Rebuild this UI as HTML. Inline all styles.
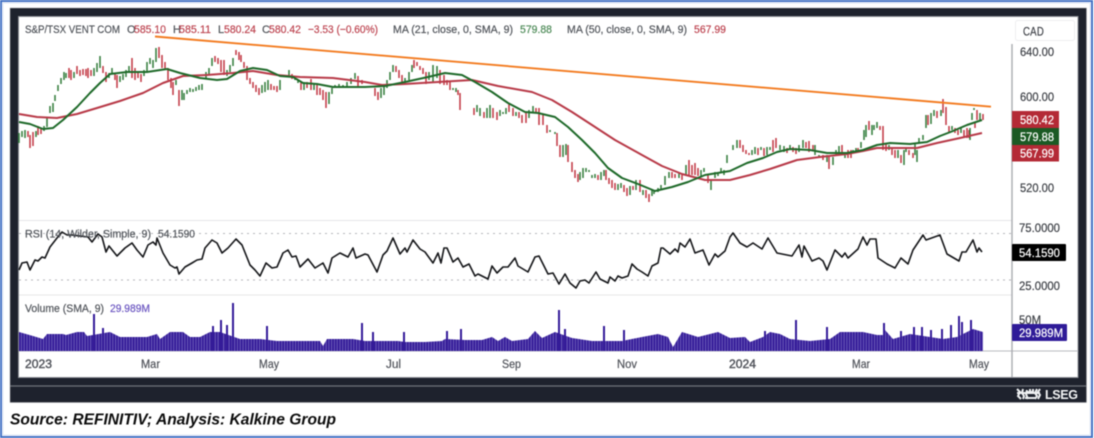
<!DOCTYPE html>
<html>
<head>
<meta charset="utf-8">
<style>
html,body{margin:0;padding:0;background:#fff;width:1094px;height:438px;overflow:hidden}
svg{display:block;filter:blur(.45px)}
text{font-family:"Liberation Sans",sans-serif;stroke-width:.2px}
.g{fill:#50545a;stroke:#50545a;font-size:11px}
.r{fill:#bd4450;stroke:#bd4450;font-size:11px}
.a{fill:#3f4248;stroke:#3f4248;font-size:12px}
.w{fill:#fff;stroke:#fff;font-size:12px}
.m{fill:#50535a;stroke:#50535a;font-size:11.5px}
</style>
</head>
<body>
<svg width="1094" height="438" viewBox="0 0 1094 438" xmlns="http://www.w3.org/2000/svg">
<defs>
<pattern id="vp" width="2.77" height="10" patternUnits="userSpaceOnUse" x="19">
<rect width="2.77" height="10" fill="#8477c6"/>
<rect width="2.1" height="10" fill="#341b98"/>
</pattern>
</defs>
<rect x="1" y="1" width="1091" height="436" fill="#fff" stroke="#4472c4" stroke-width="2"/>
<rect x="3" y="3" width="1087" height="432" fill="none" stroke="#dfe7f5" stroke-width="1"/>
<rect x="10" y="8" width="1076.500" height="394.500" fill="#1e222d" stroke="#a6a8ad" stroke-width=".5"/>
<rect x="18.500" y="16.500" width="1059.500" height="361" fill="#fff" stroke="#8a8d94" stroke-width="1"/>
<path d="M10 386H1086" stroke="#70737b" stroke-width="1.300"/>

<path d="M19 220.500H1012M19 295H1012" stroke="#e6e6e8" stroke-width="1"/>
<path d="M19 233.500H1012M19 280H1012" stroke="#b5b6ba" stroke-width="1" stroke-dasharray="2 4"/>
<path d="M19 351H1078" stroke="#b9bbbf" stroke-width="1"/>
<path d="M1012 44V377" stroke="#aaabaf" stroke-width="1.400"/>

<!-- red candles -->
<path fill="none" stroke="#c23540" stroke-width="1.500" d="M28 131V137M30 135V148M33 132V146M38 126V135M41 128V134M69 68V78M71 70V80M77 66V74M80 70V76M83 69V75M86 69V76M88 68V78M91 70V76M103 66V73M106 72V82M115 73V80M117 75V88M132 58V78M135 68V80M138 72V78M141 74V82M159 47V58M162 55V68M165 62V70M168 68V80M171 78V88M173 82V95M179 90V106M215 56V62M218 58V64M221 60V72M224 60V75M236 50V55M239 52V60M241 55V62M244 62V68M247 66V80M250 78V84M253 82V88M256 85V92M259 88V95M271 84V90M274 86V90M277 86V92M292 74V79M301 82V90M307 82V88M311 79V90M317 85V95M320 88V95M323 90V100M326 92V108M358 76V88M362 80V84M375 88V96M378 92V100M396 66V72M399 70V78M402 75V82M414 60V68M417 62V66M420 66V70M423 68V74M426 72V84M440 70V84M444 75V85M447 80V85M450 82V90M458 90V95M460 93V110M474 108V115M484 112V118M493 108V118M497 112V120M509 104V112M513 108V116M519 112V118M522 115V123M526 113V123M536 108V112M539 108V125M543 115V125M547 125V133M557 133V146M560 145V157M568 145V162M572 162V172M575 170V178M578 174V182M598 175V180M606 170V180M609 178V184M612 180V188M615 183V190M624 185V192M627 188V196M633 186V190M640 180V192M646 190V198M649 194V202M672 172V178M675 174V178M682 174V180M689 160V175M692 165V175M695 163V175M698 168V176M708 175V183M740 140V148M743 145V152M746 150V154M749 153V155M758 148V155M764 148V156M773 140V152M776 138V148M787 148V153M793 147V152M796 148V154M806 142V148M809 141V152M813 145V150M823 155V160M829 157V169M842 145V155M848 150V158M851 150V158M858 148V152M869 121V130M880 126V130M883 126V150M886 143V151M892 148V155M895 150V158M901 155V163M909 150V155M913 153V158M928 115V125M937 111V118M943 99V113M946 107V125M949 126V133M955 128V133M958 130V135M964 130V138M967 128V138M969 130V138M975 122V128M977 110V120M983 114V120"/>
<!-- green candles -->
<path fill="none" stroke="#2f7a38" stroke-width="1.500" d="M19 133V143M22 131V137M25 130V138M36 131V137M44 126V131M47 118V127M50 106V113M53 103V112M55 95V101M58 85V91M61 78V84M64 72V80M66 73V78M74 72V78M94 68V76M97 63V72M100 56V68M109 73V78M112 68V74M120 76V82M123 74V80M126 70V77M129 66V72M144 70V76M147 62V72M150 58V64M153 60V68M156 48V62M176 80V85M182 90V100M184 93V100M187 90V94M190 88V92M193 89V92M196 87V91M199 85V90M202 84V90M206 72V78M209 68V74M212 58V66M227 70V76M230 65V72M233 58V66M262 85V93M265 82V92M268 80V90M280 80V90M289 70V76M295 77V80M298 80V83M304 82V90M314 83V90M329 92V104M332 88V94M335 85V87M339 84V87M343 85V87M347 82V86M351 78V84M355 73V79M381 88V98M384 85V95M387 80V88M390 72V80M393 65V72M405 78V82M409 72V80M412 65V72M429 72V80M433 65V82M437 66V78M453 88V90M456 88V92M477 105V112M480 108V116M487 108V118M490 105V118M500 110V116M503 112V114M506 108V114M516 112V116M529 110V118M533 106V112M550 130V132M555 132V134M563 145V157M566 144V155M580 172V180M583 168V178M586 168V172M589 170V172M592 175V178M595 174V178M601 172V180M604 170V176M618 184V190M621 183V188M630 186V195M636 180V190M643 190V195M652 190V196M654 190V194M658 188V192M661 185V190M665 176V185M669 172V178M679 172V178M686 165V175M701 170V176M704 168V172M711 180V190M715 172V178M718 172V176M721 168V172M724 170V175M727 155V163M733 145V150M737 140V148M752 150V155M755 147V154M761 147V150M767 147V155M770 147V150M780 145V150M784 146V152M790 145V150M799 145V152M803 140V148M815 145V155M819 155V158M827 155V162M833 157V165M836 150V155M839 146V152M845 155V158M853 150V153M856 148V153M861 142V148M864 130V140M866 125V137M872 125V135M874 125V130M877 122V128M889 145V150M898 150V158M904 150V165M906 148V152M915 143V155M917 150V162M919 138V142M923 135V140M926 115V128M931 113V124M934 110V116M941 110V116M952 126V130M961 128V133M970 128V140M972 113V120M974 108V110M980 113V120"/>

<!-- MA 50 -->
<polyline fill="none" stroke="#b83a48" stroke-width="2" stroke-linejoin="round" points="19,114 37,117 57,118 77,114 97,108 120,101 143,93 163,83 183,76 207,75 233,73 253,71 277,75 300,77 333,78 365,82 382,85 405,84 438,82 472,80 498,86 532,92 552,100 572,112 592,125 615,140 642,155 662,166 682,174 705,180 730,180 750,175 770,169 797,160 820,157 847,154 863,151 877,148 897,148 917,148 937,143 960,138 982,133"/>
<!-- MA 21 -->
<polyline fill="none" stroke="#1f6a2a" stroke-width="2" stroke-linejoin="round" points="19,122 30,124 43,129 53,128 63,120 77,107 90,93 100,83 110,74 127,72 147,72 167,69 180,73 200,78 217,80 227,79 240,71 253,68 267,70 280,76 293,77 303,83 317,84 333,87 353,87 365,87 385,86 405,82 428,77 445,73 462,75 475,82 492,92 508,103 525,112 538,113 555,117 568,127 582,140 595,153 608,168 622,178 638,184 655,191 672,187 688,182 705,175 730,171 747,163 763,158 777,152 790,149 810,150 827,153 847,153 863,150 877,145 890,143 910,144 927,142 940,136 953,131 967,125 982,120"/>
<!-- trend -->
<line x1="155" y1="36.500" x2="991" y2="106.700" stroke="#f37b20" stroke-width="1.900"/>

<!-- legend -->
<text class="g" x="25" y="33" textLength="95" lengthAdjust="spacingAndGlyphs">S&amp;P/TSX VENT COM</text>
<text class="g" x="127" y="33">O</text><text class="r" x="134" y="33" textLength="32" lengthAdjust="spacingAndGlyphs">585.10</text>
<text class="g" x="173" y="33">H</text><text class="r" x="179" y="33" textLength="32" lengthAdjust="spacingAndGlyphs">585.11</text>
<text class="g" x="218" y="33">L</text><text class="r" x="224" y="33" textLength="32" lengthAdjust="spacingAndGlyphs">580.24</text>
<text class="g" x="262" y="33">C</text><text class="r" x="269" y="33" textLength="32" lengthAdjust="spacingAndGlyphs">580.42</text>
<text class="r" x="308" y="33" textLength="70" lengthAdjust="spacingAndGlyphs">−3.53 (−0.60%)</text>
<text class="g" x="393" y="33" textLength="120" lengthAdjust="spacingAndGlyphs">MA (21, close, 0, SMA, 9)</text>
<text class="g" x="520" y="33" textLength="32" lengthAdjust="spacingAndGlyphs" style="fill:#4d8a57;stroke:#4d8a57">579.88</text>
<text class="g" x="567" y="33" textLength="120" lengthAdjust="spacingAndGlyphs">MA (50, close, 0, SMA, 9)</text>
<text class="r" x="694" y="33" textLength="32" lengthAdjust="spacingAndGlyphs">567.99</text>

<!-- CAD -->
<rect x="1015.500" y="20.500" width="59" height="20" rx="2" fill="#fff" stroke="#eeeeef"/>
<text class="a" x="1023" y="35.500" textLength="21" lengthAdjust="spacingAndGlyphs" style="letter-spacing:.3px">CAD</text>

<!-- axis -->
<text class="a" x="1020" y="56" textLength="34" lengthAdjust="spacingAndGlyphs">640.00</text>
<text class="a" x="1020" y="101" textLength="34" lengthAdjust="spacingAndGlyphs">600.00</text>
<text class="a" x="1020" y="192" textLength="34" lengthAdjust="spacingAndGlyphs">520.00</text>
<rect x="1012" y="111" width="47" height="17" fill="#b42a36"/>
<rect x="1012" y="128" width="47" height="17" fill="#1b5a24"/>
<rect x="1012" y="145" width="47" height="16.500" fill="#b42a36"/>
<text class="w" x="1020" y="124" textLength="34" lengthAdjust="spacingAndGlyphs">580.42</text>
<text class="w" x="1020" y="141" textLength="34" lengthAdjust="spacingAndGlyphs">579.88</text>
<text class="w" x="1020" y="157.500" textLength="34" lengthAdjust="spacingAndGlyphs">567.99</text>

<!-- RSI -->
<polyline fill="none" stroke="#16171a" stroke-width="1.600" stroke-linejoin="round" points="19,270 22,263 27,262 30,270 35,260 38,261 42,257 45,258 50,247 57,238 62,232 67,235 72,235 80,236 88,237 92,242 98,234 102,237 106,252 109,246 117,256 125,248 132,243 137,250 143,257 148,245 153,242 156,245 157,238 163,253 170,265 175,268 177,267 179,274 185,267 192,263 197,260 202,259 205,248 212,240 217,243 222,253 228,248 236,239 242,245 250,265 255,270 260,276 266,263 272,268 277,267 283,253 288,250 292,257 296,256 300,267 308,259 315,268 323,263 328,273 332,258 340,253 348,257 353,248 356,258 365,254 368,255 377,272 383,255 387,251 393,238 400,254 405,248 407,252 413,240 420,249 425,252 433,263 438,253 441,263 444,248 447,248 453,262 458,258 463,267 469,264 475,276 478,274 488,279 492,266 497,273 503,267 508,267 515,258 518,266 528,272 535,257 539,256 548,274 553,273 559,284 565,274 570,283 576,288 580,281 585,280 589,283 596,272 600,279 608,283 610,277 615,281 618,276 622,278 628,276 632,264 637,269 642,272 648,276 652,266 658,263 661,248 663,248 670,254 675,249 678,252 680,243 685,247 690,239 695,253 703,250 709,265 715,254 718,257 725,251 730,237 733,233 740,243 747,247 753,243 762,249 768,238 777,253 792,256 799,245 802,257 804,246 812,261 819,258 823,261 827,270 835,250 842,257 845,253 848,258 858,249 863,237 867,245 870,239 876,239 878,258 887,264 895,268 901,258 908,264 913,250 923,235 926,240 940,235 947,254 959,261 962,252 966,252 973,240 977,252 979,248 982,252"/>
<text class="g" x="25" y="237.500" textLength="126" lengthAdjust="spacingAndGlyphs">RSI (14, Wilder, Simple, 9)</text>
<text class="g" x="158" y="237.500" textLength="37" lengthAdjust="spacingAndGlyphs">54.1590</text>
<text class="a" x="1019" y="232" textLength="41" lengthAdjust="spacingAndGlyphs">75.0000</text>
<rect x="1012" y="244" width="54" height="17" rx="1" fill="#000"/>
<text class="w" x="1019" y="257" textLength="41" lengthAdjust="spacingAndGlyphs">54.1590</text>
<text class="a" x="1019" y="290" textLength="41" lengthAdjust="spacingAndGlyphs">25.0000</text>

<!-- Volume -->
<polygon fill="url(#vp)" points="19,351 19,332 33,336 43,339 47,334 63,334 66,335 77,332 84,332 87,336 110,332 120,337 147,337 157,334 160,339 170,332 183,332 190,337 200,337 210,332 220,332 240,339 260,339 277,341 320,341 323,346 327,339 353,339 365,341 398,341 405,342 425,342 442,341 445,339 465,340 482,340 492,337 498,341 505,337 512,341 528,339 535,331 542,338 555,332 572,338 592,341 622,341 642,337 658,334 668,337 673,347 682,332 698,337 718,332 730,338 745,337 750,342 763,337 770,332 780,334 790,339 810,341 830,339 840,332 863,332 877,335 883,335 885,330 893,339 910,334 930,337 943,339 957,337 973,329 983,332 983,351"/>
<path fill="none" stroke="#341b98" stroke-width="2" d="M94 351V314M103 351V328M213 351V326M221 351V320M227 351V325M233 351V303M267 351V326M362 351V323M373 351V332M404 351V332M447 351V331M461 351V329M559 351V310M565 351V329M604 351V326M624 351V330M765 351V331M796 351V320M827 351V327M884 351V323M901 351V331M914 351V327M922 351V327M931 351V330M942 351V329M951 351V325M959 351V316M962 351V322M971 351V320"/>
<text class="g" x="25" y="312" textLength="79" lengthAdjust="spacingAndGlyphs">Volume (SMA, 9)</text>
<text class="g" x="110" y="312" textLength="40" lengthAdjust="spacingAndGlyphs" style="fill:#6a55c0;stroke:#6a55c0">29.989M</text>
<text class="a" x="1019" y="324" textLength="22" lengthAdjust="spacingAndGlyphs">50M</text>
<rect x="1012" y="324" width="55" height="17" rx="1" fill="#2f1b98"/>
<text class="w" x="1019" y="337" textLength="44" lengthAdjust="spacingAndGlyphs">29.989M</text>

<!-- months -->
<text class="m" x="25" y="368" textLength="27" lengthAdjust="spacingAndGlyphs" style="stroke-width:.4px">2023</text>
<text class="m" x="141" y="368" textLength="19" lengthAdjust="spacingAndGlyphs">Mar</text>
<text class="m" x="259" y="368" textLength="20" lengthAdjust="spacingAndGlyphs">May</text>
<text class="m" x="386" y="368" textLength="15" lengthAdjust="spacingAndGlyphs">Jul</text>
<text class="m" x="502" y="368" textLength="19" lengthAdjust="spacingAndGlyphs">Sep</text>
<text class="m" x="617" y="368" textLength="20" lengthAdjust="spacingAndGlyphs">Nov</text>
<text class="m" x="729" y="368" textLength="27" lengthAdjust="spacingAndGlyphs" style="stroke-width:.4px">2024</text>
<text class="m" x="852" y="368" textLength="18" lengthAdjust="spacingAndGlyphs">Mar</text>
<text class="m" x="969" y="368" textLength="20" lengthAdjust="spacingAndGlyphs">May</text>

<!-- LSEG -->
<path fill="none" stroke="#eef0f2" stroke-width="2" d="M1017 389L1020 392L1018 396L1021 399M1023 389L1022 393L1024 396L1023 399M1027 390L1026 394L1028 399M1030 389V393M1033 389V394M1037 389L1035 393L1037 396L1035 399M1040 389L1038 392L1040 395L1038 399M1026 392H1034M1025 398H1035M1017 393H1040"/>
<text x="1045" y="399" fill="#f4f5f6" textLength="33" lengthAdjust="spacing" style="font-size:12.500px;font-weight:bold">LSEG</text>

<!-- source -->
<text x="10" y="424.500" fill="#0c0c0c" textLength="326" lengthAdjust="spacingAndGlyphs" style="font-size:16px;font-weight:bold;font-style:italic">Source: REFINITIV; Analysis: Kalkine Group</text>
</svg>
</body>
</html>
